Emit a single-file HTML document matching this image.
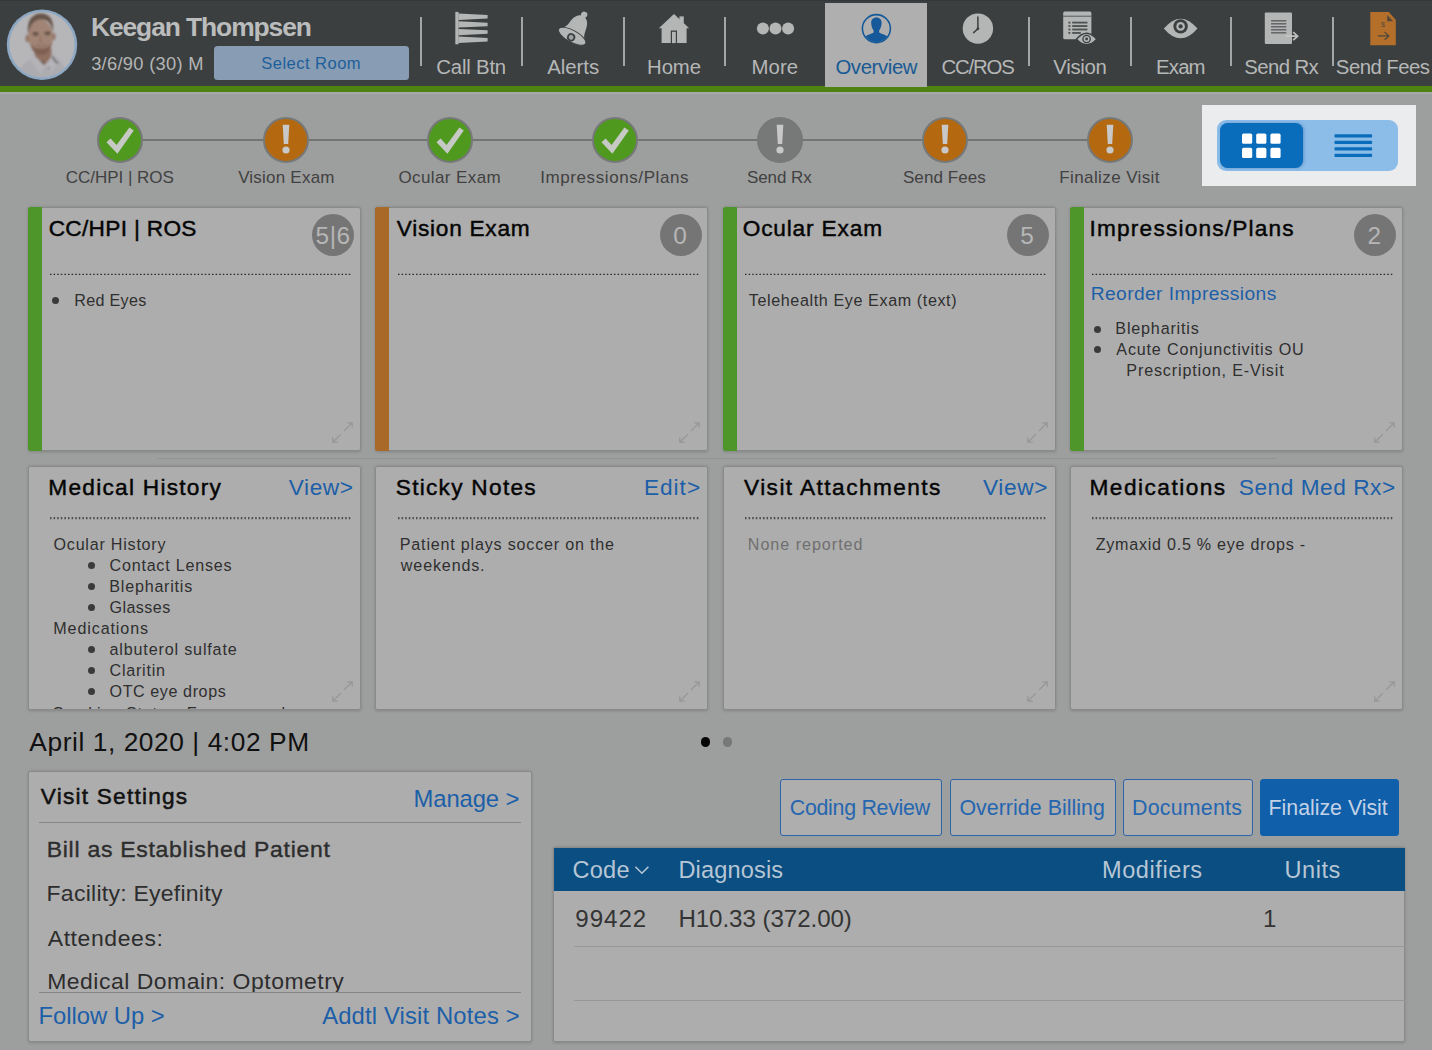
<!DOCTYPE html>
<html lang="en"><head><meta charset="utf-8"><title>Overview</title>
<style>
html,body{margin:0;padding:0;}
body{background:#9d9e9e;font-family:"Liberation Sans",sans-serif;overflow:hidden;}
#app{position:relative;width:1432px;height:1050px;overflow:hidden;background:#9d9e9e;}
#app div,#app svg{position:absolute;}
.t{position:absolute;white-space:nowrap;line-height:1;font-family:"Liberation Sans",sans-serif;}
.hdr{left:0;top:0;width:1432px;height:86px;background:#3b3f40;}
.gbar{left:0;top:86.2px;width:1432px;height:5.6px;background:#4f8311;}
.sep{width:2px;top:17px;height:49px;background:#a4a5a5;}
.card{background:#adadad;border:1px solid #8a8a8a;border-radius:2.5px;box-sizing:border-box;box-shadow:0 0.5px 3px rgba(0,0,0,0.17);}
.bar{width:14px;top:-1px;left:-1px;bottom:-1px;border-radius:2.5px 0 0 2.5px;}
.dot{height:1px;background-image:repeating-linear-gradient(90deg,#3a3a3a 0,#3a3a3a 1px,transparent 1px,transparent 3.1px);}
.dot2{height:2px;background-image:repeating-linear-gradient(90deg,#4a4a4a 0,#4a4a4a 1.2px,transparent 1.2px,transparent 3.1px);opacity:.85;}
.badge{width:42px;height:42px;border-radius:50%;background:#757575;}
.bul{width:7px;height:7px;border-radius:50%;background:#3a3a3a;}
.step{width:42px;height:42px;border-radius:50%;border:2px solid #777878;}
.btn{top:778.5px;height:57px;box-sizing:border-box;border:1.5px solid #2a64a9;border-radius:3px;background:#aeaeae;}
.hl{left:1202px;top:105px;width:213.6px;height:81.2px;background:#ebecee;}
.clip{overflow:hidden;}

</style></head>
<body>
<div id="app">
<div class="hdr"></div>
<div class="gbar"></div>
<div style="left:0;top:0;width:1432px;height:1px;background:#34383a"></div>
<div style="left:0;top:92px;width:1432px;height:2px;background:#a7a8a8"></div>
<!-- avatar -->
<svg style="left:6px;top:9px" width="72" height="72" viewBox="0 0 72 72">
  <defs>
    <clipPath id="avc"><circle cx="36" cy="35.7" r="32.6"/></clipPath>
    <filter id="avb" x="-10%" y="-10%" width="120%" height="120%"><feGaussianBlur stdDeviation="0.8"/></filter>
  </defs>
  <circle cx="36" cy="35.7" r="35.2" fill="#8ea8c3"/>
  <circle cx="36" cy="35.7" r="32.6" fill="#b6b6b9"/>
  <g clip-path="url(#avc)"><g filter="url(#avb)">
    <path d="M10 72 C12 58 20 52 28 48 L33 44 L46 46 C54 50 60 56 63 72 Z" fill="#acacb0"/>
    <path d="M28 40 L29 47.4 L38.4 56.6 L45.4 49.4 L45.6 40 Z" fill="#8f7060"/>
    <path d="M27 45 L38.4 57 L35 66 L24 50 Z" fill="#b4b4b8"/>
    <path d="M46.5 46 L38.6 57 L44.5 64 L52.5 54 Z" fill="#b4b4b8"/>
    <path d="M46.6 47.4 L48.6 51.6 L52 54.6" fill="none" stroke="#4a4a4e" stroke-width="1.3"/>
    <path d="M35.6 52.6 L37.6 54.2" fill="none" stroke="#4a4a4e" stroke-width="1.6"/>
    <circle cx="42.6" cy="59.4" r="0.9" fill="#55555a"/>
    <ellipse cx="21.6" cy="29.6" rx="2.2" ry="3.8" fill="#94756a"/>
    <ellipse cx="47.6" cy="27.6" rx="2" ry="3.6" fill="#94756a"/>
    <ellipse cx="34.6" cy="27.4" rx="12.2" ry="17" fill="#a18474" transform="rotate(-4 34.6 27.4)"/>
    <path d="M22.4 25 C20 10 28 4.6 35 4.6 C43.4 4.6 48.6 10.6 46.8 23.6 C45.8 15 42.4 10 34.6 10.4 C27.6 10.8 24 16 22.4 25 Z" fill="#685549"/>
    <path d="M24 33 C25.6 42.6 30 46 35.4 46 C40.6 46 45 42 46.2 32 C44.4 37.4 41 39.4 35.4 39.6 C30 39.8 26 38 24 33 Z" fill="#7f6152"/>
    <path d="M26.6 24.6 Q29.4 23 32.4 24.6 M38.6 24 Q41.4 22.6 44.4 24" fill="none" stroke="#4c3a32" stroke-width="1.5"/>
    <path d="M27.6 26.4 Q29.6 25.6 31.8 26.4 M39.4 25.8 Q41.6 25 43.6 25.8" fill="none" stroke="#3f302a" stroke-width="1.2"/>
    <path d="M34.8 27 L34 33 L36.6 33.4" fill="none" stroke="#866757" stroke-width="1"/>
    <path d="M30.6 36.2 Q35.6 39.6 41 35.6 Q35.8 37.6 30.6 36.2Z" fill="#c4b6b0" stroke="#6a4e44" stroke-width="0.5"/>
  </g></g>
</svg>
<div style="left:214px;top:46px;width:195px;height:34px;border-radius:3.5px;background:#889cb3"></div>
<!-- separators -->
<div class="sep" style="left:420px"></div><div class="sep" style="left:521px"></div><div class="sep" style="left:623px"></div><div class="sep" style="left:723.5px"></div>
<div class="sep" style="left:1027.7px"></div><div class="sep" style="left:1129.8px"></div><div class="sep" style="left:1229.9px"></div><div class="sep" style="left:1332px"></div>
<div style="left:825px;top:2.5px;width:102px;height:84px;background:#afafaf"></div>
<!-- nav icons -->
<svg style="left:450px;top:8px" width="44" height="40" viewBox="450 8 44 40" fill="#b4b5b5">
  <rect x="455.3" y="11.9" width="3.3" height="32.4"/>
  <path d="M458.4 13.55 L487.6 15.00 V18.50 L458.4 19.95Z M458.4 21.20 L487.6 22.65 V26.15 L458.4 27.60Z M458.4 28.90 L487.6 30.35 V33.85 L458.4 35.30Z M458.4 36.55 L487.6 38.00 V41.50 L458.4 42.95Z"/>
</svg>
<svg style="left:552px;top:4px" width="48" height="50" viewBox="552 4 48 50">
  <g transform="translate(578.1 25.6) rotate(29)" fill="#b4b5b5">
    <circle cx="0" cy="-12.4" r="3.2"/>
    <path d="M0 -10.6 C6.4 -10.6 8.4 -4 9.2 2 C9.8 6.4 11.6 9 14.6 11 L-14.6 11 C-11.6 9 -9.8 6.4 -9.2 2 C-8.4 -4 -6.4 -10.6 0 -10.6Z"/>
    <ellipse cx="0" cy="12.2" rx="15.3" ry="5.9" stroke="#3b3f40" stroke-width="0.9"/>
    <circle cx="-0.4" cy="13.6" r="4.1" fill="#3b3f40"/>
    <circle cx="-0.4" cy="13.6" r="2.4" fill="#9fa1a1"/>
  </g>
</svg>
<svg style="left:655px;top:10px" width="38" height="36" viewBox="655 10 38 36" fill="#b4b5b5">
  <path d="M674 13.9 L689.2 28.2 L686.6 28.2 L686.6 43.1 L661.6 43.1 L661.6 28.2 L658.8 28.2 Z"/>
  <rect x="679.4" y="16.4" width="4.4" height="7"/>
  <rect x="670.8" y="30.5" width="6.2" height="12.6" fill="#3b3f40"/>
  <rect x="672" y="31.8" width="3.8" height="11.3"/>
</svg>
<svg style="left:752px;top:20px" width="46" height="18" viewBox="752 20 46 18" fill="#b4b5b5">
  <circle cx="762.9" cy="28.5" r="6"/><circle cx="775.5" cy="28.5" r="6"/><circle cx="788.1" cy="28.5" r="6"/>
</svg>
<svg style="left:858px;top:10px" width="38" height="38" viewBox="858 10 38 38">
  <defs><clipPath id="ovc"><circle cx="876.4" cy="28.6" r="13.4"/></clipPath></defs>
  <circle cx="876.4" cy="28.6" r="14" fill="none" stroke="#15599a" stroke-width="1.6"/>
  <g clip-path="url(#ovc)" fill="#15599a">
    <path d="M876.4 17.6 C880.2 17.6 881.8 20.3 881.6 23.6 C881.4 27 880.2 29.3 879.2 30.4 L879.2 32.6 C881 34 886.5 34.8 888.3 37.8 L888.3 44 L864.5 44 L864.5 37.8 C866.3 34.8 871.8 34 873.6 32.6 L873.6 30.4 C872.6 29.3 871.4 27 871.2 23.6 C871 20.3 872.6 17.6 876.4 17.6Z"/>
  </g>
</svg>
<svg style="left:960px;top:10px" width="38" height="38" viewBox="960 10 38 38">
  <circle cx="977.9" cy="28.6" r="15.2" fill="#b4b5b5"/>
  <path d="M977.9 17 L977.9 28.8 L973.6 32.6" fill="none" stroke="#3b3f40" stroke-width="1.5" stroke-linecap="round" stroke-linejoin="round"/>
  <circle cx="977.9" cy="28.8" r="1.4" fill="#3b3f40"/>
</svg>
<svg style="left:1060px;top:8px" width="40" height="42" viewBox="1060 8 40 42">
  <rect x="1063.2" y="11.6" width="28.2" height="27.6" rx="1.5" fill="#b4b5b5"/>
  <rect x="1063.2" y="15.6" width="28.2" height="1.3" fill="#3b3f40" opacity=".6"/>
  <g fill="#3b3f40" opacity=".85">
    <rect x="1068.4" y="21.7" width="2" height="1.8"/><rect x="1072.2" y="21.7" width="15.2" height="1.8"/>
    <rect x="1068.4" y="25.15" width="2" height="1.8"/><rect x="1072.2" y="25.15" width="15.2" height="1.8"/>
    <rect x="1068.4" y="28.6" width="2" height="1.8"/><rect x="1072.2" y="28.6" width="15.2" height="1.8"/>
    <rect x="1068.4" y="32.05" width="2" height="1.8"/><rect x="1072.2" y="32.05" width="8.6" height="1.8"/>
  </g>
  <path d="M1076.4 39.2 Q1086.6 27.4 1096.8 39.2 Q1086.6 50 1076.4 39.2Z" fill="#b4b5b5" stroke="#3b3f40" stroke-width="1.4"/>
  <circle cx="1086.6" cy="39" r="3.7" fill="none" stroke="#3b3f40" stroke-width="1.3"/>
  <circle cx="1086.6" cy="39" r="1.4" fill="#3b3f40"/>
</svg>
<svg style="left:1160px;top:14px" width="42" height="30" viewBox="1160 14 42 30">
  <path d="M1163.8 28.5 Q1180.6 8.8 1197.5 28.5 Q1180.6 48.2 1163.8 28.5Z" fill="#b4b5b5"/>
  <circle cx="1180.6" cy="26.4" r="7.2" fill="#3b3f40"/>
  <circle cx="1180.6" cy="26.4" r="4.3" fill="#b4b5b5"/>
  <circle cx="1180.6" cy="26.4" r="2.1" fill="#3b3f40"/>
</svg>
<svg style="left:1260px;top:8px" width="42" height="40" viewBox="1260 8 42 40">
  <rect x="1264.8" y="12.6" width="27.2" height="31.4" rx="1" fill="#b4b5b5"/>
  <g fill="#3b3f40" opacity=".72">
    <rect x="1271.1" y="20.1" width="15.2" height="1.4"/><rect x="1271.1" y="23.1" width="15.2" height="1.4"/><rect x="1271.1" y="26.1" width="15.2" height="1.4"/>
    <rect x="1271.1" y="29.1" width="15.2" height="1.4"/><rect x="1271.1" y="32.1" width="15.2" height="1.4"/>
  </g>
  <path d="M1285.6 36.2 H1297.4 M1293.2 32.2 L1297.6 36.2 L1293.2 40.2" fill="none" stroke="#bdbebe" stroke-width="1.8"/>
  <path d="M1285.6 36.2 H1292" fill="none" stroke="#c4c5c5" stroke-width="1.8" opacity=".8"/>
</svg>
<svg style="left:1365px;top:8px" width="36" height="42" viewBox="1365 8 36 42">
  <path d="M1370.3 12 L1388.8 12 L1395.8 20 L1395.8 45.3 L1370.3 45.3Z" fill="#b46f2b"/>
  <path d="M1387.2 15 L1393.2 21.2 L1387.2 21.2Z" fill="#3b3f40" opacity=".8"/>
  <path d="M1377.8 35.9 H1388.6 M1384.6 31.9 L1388.8 35.9 L1384.6 39.9" fill="none" stroke="#3b3f40" stroke-width="1.3" opacity=".85"/>
  <text x="1383.2" y="27" font-family="Liberation Sans, sans-serif" font-size="7.5" text-anchor="middle" fill="#3b3f40" opacity=".8">$</text>
</svg>
<!-- timeline -->
<div style="left:120px;top:138.8px;width:990px;height:2px;background:#737474"></div>
<div class="step" style="left:97.3px;top:116.7px;background:#4f991f"></div>
<svg style="left:97.3px;top:116.7px" width="46" height="46" viewBox="0 0 46 46"><path d="M9.5 25.2 L13.6 21.4 L19.6 28 L32.4 10.6 L36.8 13.6 L20.4 36.8 Z" fill="#c6c9c4"/></svg>
<div class="step" style="left:262.5px;top:116.7px;background:#b4680f"></div>
<svg style="left:262.5px;top:116.7px" width="46" height="46" viewBox="0 0 46 46"><path d="M19.7 7.8 H26.3 L25.2 27 H20.8 Z" fill="#c8c8c8"/><circle cx="23" cy="33" r="3.6" fill="#c8c8c8"/></svg>
<div class="step" style="left:427.3px;top:116.7px;background:#4f991f"></div>
<svg style="left:427.3px;top:116.7px" width="46" height="46" viewBox="0 0 46 46"><path d="M9.5 25.2 L13.6 21.4 L19.6 28 L32.4 10.6 L36.8 13.6 L20.4 36.8 Z" fill="#c6c9c4"/></svg>
<div class="step" style="left:592.3px;top:116.7px;background:#4f991f"></div>
<svg style="left:592.3px;top:116.7px" width="46" height="46" viewBox="0 0 46 46"><path d="M9.5 25.2 L13.6 21.4 L19.6 28 L32.4 10.6 L36.8 13.6 L20.4 36.8 Z" fill="#c6c9c4"/></svg>
<div class="step" style="left:757.3px;top:116.7px;background:#777878"></div>
<svg style="left:757.3px;top:116.7px" width="46" height="46" viewBox="0 0 46 46"><path d="M19.7 7.8 H26.3 L25.2 27 H20.8 Z" fill="#c8c8c8"/><circle cx="23" cy="33" r="3.6" fill="#c8c8c8"/></svg>
<div class="step" style="left:922.3px;top:116.7px;background:#b4680f"></div>
<svg style="left:922.3px;top:116.7px" width="46" height="46" viewBox="0 0 46 46"><path d="M19.7 7.8 H26.3 L25.2 27 H20.8 Z" fill="#c8c8c8"/><circle cx="23" cy="33" r="3.6" fill="#c8c8c8"/></svg>
<div class="step" style="left:1087.3px;top:116.7px;background:#b4680f"></div>
<svg style="left:1087.3px;top:116.7px" width="46" height="46" viewBox="0 0 46 46"><path d="M19.7 7.8 H26.3 L25.2 27 H20.8 Z" fill="#c8c8c8"/><circle cx="23" cy="33" r="3.6" fill="#c8c8c8"/></svg>
<!-- view toggle (highlighted) -->
<div class="hl"></div>
<div style="left:1216.7px;top:120px;width:181.6px;height:50.5px;border-radius:9px;background:#8cbce8"></div>
<div style="left:1219.6px;top:123.4px;width:83.4px;height:44.4px;border-radius:7.5px;background:#0a6dbc;box-shadow:1px 0 3px rgba(10,80,150,.35)"></div>
<svg style="left:1236px;top:128px" width="52" height="36" viewBox="1236 128 52 36" fill="#ffffff"><rect x="1242" y="133.6" width="10.2" height="10.2" rx="1.6"/><rect x="1256.2" y="133.6" width="10.2" height="10.2" rx="1.6"/><rect x="1270.4" y="133.6" width="10.2" height="10.2" rx="1.6"/><rect x="1242" y="147.8" width="10.2" height="10.2" rx="1.6"/><rect x="1256.2" y="147.8" width="10.2" height="10.2" rx="1.6"/><rect x="1270.4" y="147.8" width="10.2" height="10.2" rx="1.6"/></svg>
<svg style="left:1330px;top:130px" width="48" height="32" viewBox="1330 130 48 32" fill="#0a6dbc"><rect x="1334.5" y="134.2" width="37.6" height="3.3" rx="0.8"/><rect x="1334.5" y="140.7" width="37.6" height="3.3" rx="0.8"/><rect x="1334.5" y="147.2" width="37.6" height="3.3" rx="0.8"/><rect x="1334.5" y="153.7" width="37.6" height="3.3" rx="0.8"/></svg>
<!-- row 1 cards -->
<div class="card" style="left:28.0px;top:207.1px;width:333.2px;height:244px"><div class="bar" style="background:#4f962a"></div><svg style="right:7.2px;bottom:7.2px" width="21" height="21" viewBox="0 0 21 21" fill="none" stroke="#979797" stroke-width="1.25"><path d="M0.8 20.2 L8.8 12.2 M12 9 L20.2 0.8 M15.2 0.8 H20.2 V5.8 M0.8 15.2 V20.2 H5.8"/></svg></div>
<svg style="left:50.4px;top:273px" width="302" height="3" viewBox="0 0 302 3"><line x1="0" y1="1.4" x2="302" y2="1.4" stroke="#2a2a2a" stroke-width="1.25" stroke-dasharray="1.5 2.1"/></svg>
<div class="badge" style="left:312.2px;top:214px"></div>
<div class="card" style="left:375.3px;top:207.1px;width:333.2px;height:244px"><div class="bar" style="background:#a96a29"></div><svg style="right:7.2px;bottom:7.2px" width="21" height="21" viewBox="0 0 21 21" fill="none" stroke="#979797" stroke-width="1.25"><path d="M0.8 20.2 L8.8 12.2 M12 9 L20.2 0.8 M15.2 0.8 H20.2 V5.8 M0.8 15.2 V20.2 H5.8"/></svg></div>
<svg style="left:397.7px;top:273px" width="302" height="3" viewBox="0 0 302 3"><line x1="0" y1="1.4" x2="302" y2="1.4" stroke="#2a2a2a" stroke-width="1.25" stroke-dasharray="1.5 2.1"/></svg>
<div class="badge" style="left:659.5px;top:214px"></div>
<div class="card" style="left:722.5px;top:207.1px;width:333.2px;height:244px"><div class="bar" style="background:#4f962a"></div><svg style="right:7.2px;bottom:7.2px" width="21" height="21" viewBox="0 0 21 21" fill="none" stroke="#979797" stroke-width="1.25"><path d="M0.8 20.2 L8.8 12.2 M12 9 L20.2 0.8 M15.2 0.8 H20.2 V5.8 M0.8 15.2 V20.2 H5.8"/></svg></div>
<svg style="left:744.9px;top:273px" width="302" height="3" viewBox="0 0 302 3"><line x1="0" y1="1.4" x2="302" y2="1.4" stroke="#2a2a2a" stroke-width="1.25" stroke-dasharray="1.5 2.1"/></svg>
<div class="badge" style="left:1006.7px;top:214px"></div>
<div class="card" style="left:1069.8px;top:207.1px;width:333.2px;height:244px"><div class="bar" style="background:#4f962a"></div><svg style="right:7.2px;bottom:7.2px" width="21" height="21" viewBox="0 0 21 21" fill="none" stroke="#979797" stroke-width="1.25"><path d="M0.8 20.2 L8.8 12.2 M12 9 L20.2 0.8 M15.2 0.8 H20.2 V5.8 M0.8 15.2 V20.2 H5.8"/></svg></div>
<svg style="left:1092.2px;top:273px" width="302" height="3" viewBox="0 0 302 3"><line x1="0" y1="1.4" x2="302" y2="1.4" stroke="#2a2a2a" stroke-width="1.25" stroke-dasharray="1.5 2.1"/></svg>
<div class="badge" style="left:1354.0px;top:214px"></div>
<div class="bul" style="left:52.4px;top:297.4px"></div>
<div class="bul" style="left:1094.2px;top:325.6px"></div>
<div class="bul" style="left:1094.2px;top:346.3px"></div>
<!-- thin rule between rows -->
<div style="left:157px;top:457.6px;width:1120px;height:1px;background:#929393"></div>
<!-- row 2 cards -->
<div class="card" style="left:28.0px;top:466px;width:333.2px;height:244px"><svg style="right:7.2px;bottom:7.2px" width="21" height="21" viewBox="0 0 21 21" fill="none" stroke="#979797" stroke-width="1.25"><path d="M0.8 20.2 L8.8 12.2 M12 9 L20.2 0.8 M15.2 0.8 H20.2 V5.8 M0.8 15.2 V20.2 H5.8"/></svg><div class="clip" style="left:0;top:0;right:0;bottom:0"><span class="t" style="left:23.7px;top:237.5px;font-size:16.3px;color:#2f2f2f;letter-spacing:.69px">Smoking Status: Former smoker</span></div></div>
<svg style="left:50.4px;top:516px" width="302" height="4" viewBox="0 0 302 4"><line x1="0" y1="2.1" x2="302" y2="2.1" stroke="#4c4c4c" stroke-width="2.2" stroke-dasharray="1.5 2.1"/></svg>
<div class="card" style="left:375.3px;top:466px;width:333.2px;height:244px"><svg style="right:7.2px;bottom:7.2px" width="21" height="21" viewBox="0 0 21 21" fill="none" stroke="#979797" stroke-width="1.25"><path d="M0.8 20.2 L8.8 12.2 M12 9 L20.2 0.8 M15.2 0.8 H20.2 V5.8 M0.8 15.2 V20.2 H5.8"/></svg></div>
<svg style="left:397.7px;top:516px" width="302" height="4" viewBox="0 0 302 4"><line x1="0" y1="2.1" x2="302" y2="2.1" stroke="#4c4c4c" stroke-width="2.2" stroke-dasharray="1.5 2.1"/></svg>
<div class="card" style="left:722.5px;top:466px;width:333.2px;height:244px"><svg style="right:7.2px;bottom:7.2px" width="21" height="21" viewBox="0 0 21 21" fill="none" stroke="#979797" stroke-width="1.25"><path d="M0.8 20.2 L8.8 12.2 M12 9 L20.2 0.8 M15.2 0.8 H20.2 V5.8 M0.8 15.2 V20.2 H5.8"/></svg></div>
<svg style="left:744.9px;top:516px" width="302" height="4" viewBox="0 0 302 4"><line x1="0" y1="2.1" x2="302" y2="2.1" stroke="#4c4c4c" stroke-width="2.2" stroke-dasharray="1.5 2.1"/></svg>
<div class="card" style="left:1069.8px;top:466px;width:333.2px;height:244px"><svg style="right:7.2px;bottom:7.2px" width="21" height="21" viewBox="0 0 21 21" fill="none" stroke="#979797" stroke-width="1.25"><path d="M0.8 20.2 L8.8 12.2 M12 9 L20.2 0.8 M15.2 0.8 H20.2 V5.8 M0.8 15.2 V20.2 H5.8"/></svg></div>
<svg style="left:1092.2px;top:516px" width="302" height="4" viewBox="0 0 302 4"><line x1="0" y1="2.1" x2="302" y2="2.1" stroke="#4c4c4c" stroke-width="2.2" stroke-dasharray="1.5 2.1"/></svg>
<div class="bul" style="left:87.5px;top:562.2px"></div>
<div class="bul" style="left:87.5px;top:583.2px"></div>
<div class="bul" style="left:87.5px;top:604.2px"></div>
<div class="bul" style="left:87.5px;top:646.2px"></div>
<div class="bul" style="left:87.5px;top:667.2px"></div>
<div class="bul" style="left:87.5px;top:688.2px"></div>
<div style="left:700.9px;top:737.4px;width:9.3px;height:9.3px;border-radius:50%;background:#060606"></div>
<div style="left:723.2px;top:737.4px;width:9.3px;height:9.3px;border-radius:50%;background:#787878"></div>
<!-- visit settings -->
<div class="card" style="left:28.2px;top:771.2px;width:503.4px;height:271.3px"></div>
<div style="left:39.3px;top:822.2px;width:481.4px;height:1px;background:#868686"></div>
<div class="clip" style="left:39.3px;top:960px;width:481.4px;height:31.6px"><span class="t" style="left:7.9px;top:9.5px;font-size:22.97px;color:#2d2d2d;letter-spacing:.5px">Medical Domain: Optometry</span></div>
<div style="left:39.3px;top:991.5px;width:481.4px;height:1px;background:#868686"></div>
<!-- action buttons -->
<div class="btn" style="left:780px;width:162px"></div>
<div class="btn" style="left:949.5px;width:166.0px"></div>
<div class="btn" style="left:1123px;width:130px"></div>
<div class="btn" style="left:1260px;width:138.5px;background:#0f5faa;border-color:#0f5faa"></div>
<!-- billing table -->
<div class="card" style="left:553.3px;top:847.4px;width:852.2px;height:195px;border-radius:2px"></div>
<div style="left:553.6px;top:847.7px;width:851.6px;height:43.5px;background:#0a4e82"></div>
<svg style="left:633px;top:862px" width="18" height="16" viewBox="633 862 18 16"><path d="M635.4 866.8 L641.9 873.2 L648.4 866.8" fill="none" stroke="#b7c6d4" stroke-width="1.6"/></svg>
<div style="left:574px;top:945.5px;width:830.5px;height:1px;background:#979797"></div>
<div style="left:574px;top:1000px;width:830.5px;height:1px;background:#979797"></div>

<!-- text -->
<span class="t" style="left:90.94px;top:14px;font-size:26.45px;color:#bbbcbc;font-weight:700;letter-spacing:-1.107px;">Keegan Thompsen</span>
<span class="t" style="left:91.17px;top:55px;font-size:18.31px;color:#b4b5b5;letter-spacing:0.291px;">3/6/90 (30) M</span>
<span class="t" style="left:261.25px;top:56px;font-size:16.57px;color:#1d5f9b;letter-spacing:0.460px;">Select Room</span>
<span class="t" style="left:436.29px;top:57px;font-size:20.35px;color:#b6b7b7;letter-spacing:-0.192px;">Call Btn</span>
<span class="t" style="left:547.14px;top:57px;font-size:20.35px;color:#b6b7b7;letter-spacing:0.018px;">Alerts</span>
<span class="t" style="left:647.12px;top:57px;font-size:20.35px;color:#b6b7b7;letter-spacing:-0.123px;">Home</span>
<span class="t" style="left:751.52px;top:57px;font-size:20.35px;color:#b6b7b7;letter-spacing:0.077px;">More</span>
<span class="t" style="left:835.41px;top:57px;font-size:20.35px;color:#185a94;letter-spacing:-0.377px;">Overview</span>
<span class="t" style="left:941.39px;top:57px;font-size:20.35px;color:#b6b7b7;letter-spacing:-1.147px;">CC/ROS</span>
<span class="t" style="left:1053.33px;top:57px;font-size:20.35px;color:#b6b7b7;letter-spacing:-0.300px;">Vision</span>
<span class="t" style="left:1156.12px;top:57px;font-size:20.35px;color:#b6b7b7;letter-spacing:-0.848px;">Exam</span>
<span class="t" style="left:1244.36px;top:57px;font-size:20.35px;color:#b6b7b7;letter-spacing:-0.601px;">Send Rx</span>
<span class="t" style="left:1335.86px;top:57px;font-size:20.35px;color:#b6b7b7;letter-spacing:-0.536px;">Send Fees</span>
<span class="t" style="left:65.87px;top:169px;font-size:17.01px;color:#414141;letter-spacing:-0.026px;">CC/HPI | ROS</span>
<span class="t" style="left:238.14px;top:169px;font-size:17.01px;color:#414141;letter-spacing:0.218px;">Vision Exam</span>
<span class="t" style="left:398.50px;top:169px;font-size:17.01px;color:#414141;letter-spacing:0.391px;">Ocular Exam</span>
<span class="t" style="left:540.20px;top:169px;font-size:17.01px;color:#414141;letter-spacing:0.590px;">Impressions/Plans</span>
<span class="t" style="left:746.95px;top:169px;font-size:17.01px;color:#414141;letter-spacing:-0.069px;">Send Rx</span>
<span class="t" style="left:902.95px;top:169px;font-size:17.01px;color:#414141;letter-spacing:0.078px;">Send Fees</span>
<span class="t" style="left:1059.31px;top:169px;font-size:17.01px;color:#414141;letter-spacing:0.392px;">Finalize Visit</span>
<span class="t" style="left:48.67px;top:217px;font-size:22.67px;color:#050505;-webkit-text-stroke:0.45px #050505;letter-spacing:0.311px;">CC/HPI | ROS</span>
<span class="t" style="left:396.81px;top:217px;font-size:22.67px;color:#050505;-webkit-text-stroke:0.45px #050505;letter-spacing:0.729px;">Vision Exam</span>
<span class="t" style="left:742.69px;top:217px;font-size:22.67px;color:#050505;-webkit-text-stroke:0.45px #050505;letter-spacing:0.838px;">Ocular Exam</span>
<span class="t" style="left:1089.51px;top:217px;font-size:22.67px;color:#050505;-webkit-text-stroke:0.45px #050505;letter-spacing:1.193px;">Impressions/Plans</span>
<span class="t" style="left:315.57px;top:224px;font-size:24.42px;color:#b6b6b6;letter-spacing:0.513px;">5|6</span>
<span class="t" style="left:673.25px;top:224px;font-size:24.42px;color:#b6b6b6;">0</span>
<span class="t" style="left:1020.22px;top:224px;font-size:24.42px;color:#b6b6b6;">5</span>
<span class="t" style="left:1367.50px;top:224px;font-size:24.42px;color:#b6b6b6;">2</span>
<span class="t" style="left:74.22px;top:292px;font-size:16.13px;color:#2f2f2f;letter-spacing:0.323px;">Red Eyes</span>
<span class="t" style="left:748.81px;top:292px;font-size:16.13px;color:#2f2f2f;letter-spacing:0.611px;">Telehealth Eye Exam (text)</span>
<span class="t" style="left:1090.69px;top:284px;font-size:19.2px;color:#1c5fa8;letter-spacing:0.414px;">Reorder Impressions</span>
<span class="t" style="left:1115.32px;top:320px;font-size:16.13px;color:#2f2f2f;letter-spacing:0.823px;">Blepharitis</span>
<span class="t" style="left:1116.34px;top:341px;font-size:16.13px;color:#2f2f2f;letter-spacing:0.825px;">Acute Conjunctivitis OU</span>
<span class="t" style="left:1126.32px;top:362px;font-size:16.13px;color:#2f2f2f;letter-spacing:0.854px;">Prescription, E-Visit</span>
<span class="t" style="left:48.30px;top:476px;font-size:22.67px;color:#050505;-webkit-text-stroke:0.45px #050505;letter-spacing:1.263px;">Medical History</span>
<span class="t" style="left:395.78px;top:476px;font-size:22.67px;color:#050505;-webkit-text-stroke:0.45px #050505;letter-spacing:1.270px;">Sticky Notes</span>
<span class="t" style="left:744.01px;top:476px;font-size:22.67px;color:#050505;-webkit-text-stroke:0.45px #050505;letter-spacing:1.439px;">Visit Attachments</span>
<span class="t" style="left:1089.50px;top:476px;font-size:22.67px;color:#050505;-webkit-text-stroke:0.45px #050505;letter-spacing:1.474px;">Medications</span>
<span class="t" style="left:288.83px;top:476px;font-size:22.67px;color:#1c5fa8;letter-spacing:0.539px;">View&gt;</span>
<span class="t" style="left:643.99px;top:476px;font-size:22.67px;color:#1c5fa8;letter-spacing:0.963px;">Edit&gt;</span>
<span class="t" style="left:982.93px;top:476px;font-size:22.67px;color:#1c5fa8;letter-spacing:0.639px;">View&gt;</span>
<span class="t" style="left:1238.84px;top:476px;font-size:22.67px;color:#1c5fa8;letter-spacing:0.528px;">Send Med Rx&gt;</span>
<span class="t" style="left:53.53px;top:536px;font-size:16.13px;color:#2f2f2f;letter-spacing:0.767px;">Ocular History</span>
<span class="t" style="left:109.51px;top:557px;font-size:16.13px;color:#2f2f2f;letter-spacing:0.776px;">Contact Lenses</span>
<span class="t" style="left:109.32px;top:578px;font-size:16.13px;color:#2f2f2f;letter-spacing:0.773px;">Blepharitis</span>
<span class="t" style="left:109.51px;top:599px;font-size:16.13px;color:#2f2f2f;letter-spacing:0.423px;">Glasses</span>
<span class="t" style="left:53.32px;top:620px;font-size:16.13px;color:#2f2f2f;letter-spacing:0.878px;">Medications</span>
<span class="t" style="left:109.57px;top:641px;font-size:16.13px;color:#2f2f2f;letter-spacing:0.837px;">albuterol sulfate</span>
<span class="t" style="left:109.51px;top:662px;font-size:16.13px;color:#2f2f2f;letter-spacing:0.757px;">Claritin</span>
<span class="t" style="left:109.53px;top:683px;font-size:16.13px;color:#2f2f2f;letter-spacing:0.584px;">OTC eye drops</span>
<span class="t" style="left:399.82px;top:536px;font-size:16.13px;color:#2f2f2f;letter-spacing:0.797px;">Patient plays soccer on the</span>
<span class="t" style="left:400.87px;top:557px;font-size:16.13px;color:#2f2f2f;letter-spacing:0.840px;">weekends.</span>
<span class="t" style="left:747.82px;top:536px;font-size:16.13px;color:#6f6f6f;letter-spacing:0.973px;">None reported</span>
<span class="t" style="left:1095.76px;top:536px;font-size:16.13px;color:#2f2f2f;letter-spacing:0.738px;">Zymaxid 0.5 % eye drops -</span>
<span class="t" style="left:29.34px;top:729px;font-size:26.31px;color:#101010;letter-spacing:0.577px;">April 1, 2020 | 4:02 PM</span>
<span class="t" style="left:40.82px;top:785px;font-size:22.67px;color:#111;-webkit-text-stroke:0.5px #111;letter-spacing:1.215px;">Visit Settings</span>
<span class="t" style="left:413.53px;top:787px;font-size:23.84px;color:#1c5fa8;letter-spacing:-0.105px;">Manage &gt;</span>
<span class="t" style="left:46.75px;top:838px;font-size:22.97px;color:#2d2d2d;-webkit-text-stroke:0.4px #2d2d2d;letter-spacing:0.725px;">Bill as Established Patient</span>
<span class="t" style="left:46.57px;top:882px;font-size:22.97px;color:#2d2d2d;letter-spacing:0.265px;">Facility: Eyefinity</span>
<span class="t" style="left:47.74px;top:927px;font-size:22.97px;color:#2d2d2d;letter-spacing:0.588px;">Attendees:</span>
<span class="t" style="left:38.43px;top:1004px;font-size:23.84px;color:#1c5fa8;letter-spacing:-0.019px;">Follow Up &gt;</span>
<span class="t" style="left:322.14px;top:1004px;font-size:23.84px;color:#1c5fa8;letter-spacing:0.144px;">Addtl Visit Notes &gt;</span>
<span class="t" style="left:789.77px;top:798px;font-size:21.37px;color:#2566b0;letter-spacing:-0.275px;">Coding Review</span>
<span class="t" style="left:959.39px;top:798px;font-size:21.37px;color:#2566b0;letter-spacing:0.047px;">Override Billing</span>
<span class="t" style="left:1132.05px;top:798px;font-size:21.37px;color:#2566b0;letter-spacing:0.224px;">Documents</span>
<span class="t" style="left:1268.55px;top:798px;font-size:21.37px;color:#c3d2e6;letter-spacing:-0.021px;">Finalize Visit</span>
<span class="t" style="left:572.54px;top:859px;font-size:23.55px;color:#b7c6d4;letter-spacing:0.225px;">Code</span>
<span class="t" style="left:678.45px;top:859px;font-size:23.55px;color:#b7c6d4;letter-spacing:0.160px;">Diagnosis</span>
<span class="t" style="left:1101.95px;top:859px;font-size:23.55px;color:#b7c6d4;letter-spacing:0.578px;">Modifiers</span>
<span class="t" style="left:1284.53px;top:859px;font-size:23.55px;color:#b7c6d4;letter-spacing:0.510px;">Units</span>
<span class="t" style="left:575.36px;top:907px;font-size:24.13px;color:#343434;letter-spacing:0.922px;">99422</span>
<span class="t" style="left:678.41px;top:907px;font-size:24.13px;color:#343434;letter-spacing:-0.063px;">H10.33 (372.00)</span>
<span class="t" style="left:1262.88px;top:907px;font-size:24.13px;color:#343434;">1</span>
</div>
</body></html>
